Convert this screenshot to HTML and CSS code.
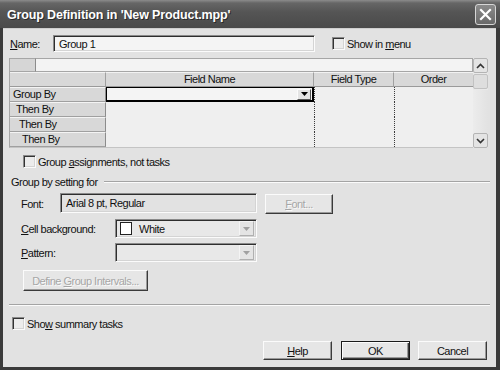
FILE: index.html
```html
<!DOCTYPE html>
<html lang="en">
<head>
    <meta charset="UTF-8">
    <title>Group Definition</title>
    <link rel="stylesheet" href="styles.css">
</head>
<body>
<div class="window">
    <div class="titlebar">
        <span class="title">Group Definition in 'New Product.mpp'</span>
        <span class="close-btn">
            <svg width="13" height="13" viewBox="0 0 13 13"><path d="M2 2 L11 11 M11 2 L2 11" stroke="#fff" stroke-width="2.2" stroke-linecap="square"/></svg>
        </span>
    </div>
    <div class="frame">
        <div class="dialog">
            <!-- nom du groupe -->
            <div class="name-row">
                <span class="name-label"><u>N</u>ame:</span>
                <div class="textbox name-box">Group 1</div>
                <span class="check menu-check"></span>
                <span class="check-label">Show in <u>m</u>enu</span>
            </div>

            <!-- grille des champs -->
            <div class="grid">
                <div class="grid-main">
                    <div class="edit-row">
                        <div class="edit-corner"></div>
                        <div class="edit-field"></div>
                    </div>
                    <div class="grid-table">
                        <div class="hcell"></div>
                        <div class="hcell">Field Name</div>
                        <div class="hcell">Field Type</div>
                        <div class="hcell">Order</div>

                        <div class="rowhead indent-0">Group By</div>
                        <div class="cell active">
                            <span class="drop-btn"><svg width="7" height="4" viewBox="0 0 7 4"><path d="M0 0 H7 L3.5 4 Z" fill="#000"/></svg></span>
                        </div>
                        <div class="cell dotted"></div>
                        <div class="cell dotted"></div>

                        <div class="rowhead indent-1">Then By</div>
                        <div class="cell"></div>
                        <div class="cell dotted"></div>
                        <div class="cell dotted"></div>

                        <div class="rowhead indent-2">Then By</div>
                        <div class="cell"></div>
                        <div class="cell dotted"></div>
                        <div class="cell dotted"></div>

                        <div class="rowhead indent-3">Then By</div>
                        <div class="cell"></div>
                        <div class="cell dotted"></div>
                        <div class="cell dotted"></div>
                    </div>
                </div>
                <div class="vscroll">
                    <div class="scroll-btn">
                        <svg width="9" height="6" viewBox="0 0 9 6"><path d="M1 5 L4.5 1.5 L8 5" fill="none" stroke="#333" stroke-width="1.6"/></svg>
                    </div>
                    <div class="scroll-thumb"></div>
                    <div class="scroll-track"></div>
                    <div class="scroll-btn">
                        <svg width="9" height="6" viewBox="0 0 9 6"><path d="M1 1 L4.5 4.5 L8 1" fill="none" stroke="#333" stroke-width="1.6"/></svg>
                    </div>
                </div>
            </div>

            <div class="check-row assign-row">
                <span class="check"></span>
                <span class="check-label">Group <u>a</u>ssignments, not tasks</span>
            </div>

            <div class="group-heading">
                <span>Group by setting for</span>
                <span class="etched-line"></span>
            </div>

            <div class="form-row font-row">
                <span class="field-label font-label">Font:</span>
                <div class="textbox font-box">Arial 8 pt, Regular</div>
                <span class="button disabled font-btn"><span><u>F</u>ont...</span></span>
            </div>

            <div class="form-row combo-row">
                <span class="field-label combo-label"><u>C</u>ell background:</span>
                <div class="textbox combo">
                    <span class="swatch"></span>
                    <span class="combo-text">White</span>
                    <span class="combo-arrow"><svg width="7" height="4" viewBox="0 0 7 4"><path d="M0 0 H7 L3.5 4 Z" fill="#a0a0a0"/></svg></span>
                </div>
            </div>

            <div class="form-row combo-row pattern-row">
                <span class="field-label combo-label"><u>P</u>attern:</span>
                <div class="textbox combo">
                    <span class="combo-text"></span>
                    <span class="combo-arrow"><svg width="7" height="4" viewBox="0 0 7 4"><path d="M0 0 H7 L3.5 4 Z" fill="#a0a0a0"/></svg></span>
                </div>
            </div>

            <div class="define-row">
                <span class="button disabled define-btn"><span>Define <u>G</u>roup Intervals...</span></span>
            </div>

            <div class="separator"></div>

            <div class="check-row summary-row">
                <span class="check"></span>
                <span class="check-label">Sho<u>w</u> summary tasks</span>
            </div>

            <div class="button-row">
                <span class="button"><span><u>H</u>elp</span></span>
                <span class="button default">OK</span>
                <span class="button">Cancel</span>
            </div>
        </div>
    </div>
</div>
</body>
</html>
```

FILE: styles.css
```css
body {
    margin: 0;
    font-family: "Liberation Sans", Arial, sans-serif;
    font-size: 11px;
    letter-spacing: -0.5px;
    color: #111;
    background: #fff;
}

u {
    text-decoration: underline;
    text-underline-offset: 1px;
}

.window {
    width: 500px;
    height: 370px;
    display: flex;
    flex-direction: column;
    background: #3a3a3a;
}

/* barre de titre */
.titlebar {
    height: 28px;
    flex: none;
    display: flex;
    align-items: center;
    padding: 0 4px 0 7px;
    background: linear-gradient(#8c8c8c 0, #666 3px, #555 12px, #4a4a4a 28px);
    color: #fff;
}

.title {
    flex: 1;
    font-size: 12.5px;
    font-weight: bold;
    letter-spacing: -0.15px;
    text-shadow: 1px 1px 0 #2a2a2a;
    margin-top: 1px;
}

.close-btn {
    width: 19px;
    height: 19px;
    border: 1px solid #d6d6d6;
    border-radius: 3px;
    background: linear-gradient(#8a8a8a, #6a6a6a);
    display: flex;
    align-items: center;
    justify-content: center;
}

.frame {
    flex: 1;
    display: flex;
    padding: 0 4px 3px 3px;
}

.dialog {
    flex: 1;
    display: flex;
    flex-direction: column;
    background: #e2e2e2;
    border-top: 1px solid #cfcfcf;
}

/* champs 3D */
.textbox {
    box-sizing: border-box;
    border: 1px solid;
    border-color: #8a8a8a #fbfbfb #fbfbfb #8a8a8a;
    box-shadow: inset 1px 1px 0 #2e2e2e, inset -1px -1px 0 #d4d4d4;
}

.check {
    box-sizing: border-box;
    width: 13px;
    height: 13px;
    flex: none;
    border: 1px solid;
    border-color: #8a8a8a #fbfbfb #fbfbfb #8a8a8a;
    box-shadow: inset 1px 1px 0 #333, inset -1px -1px 0 #d4d4d4;
    background: #ececec;
}

.check-label {
    margin-left: 2px;
}

.button {
    box-sizing: border-box;
    display: flex;
    align-items: center;
    justify-content: center;
    border: 1px solid;
    border-color: #fbfbfb #3a3a3a #3a3a3a #fbfbfb;
    box-shadow: inset -1px -1px 0 #9a9a9a;
    background: #e6e6e6;
}

.button.disabled {
    color: #a6a6a6;
    text-shadow: 1px 1px 0 #fafafa;
}

.button.default {
    border: 1px solid #1a1a1a;
    box-shadow: inset 1px 1px 0 #fbfbfb, inset -1px -1px 0 #3a3a3a, inset -2px -2px 0 #9a9a9a;
}

/* ligne du nom */
.name-row {
    margin-top: 6px;
    height: 17px;
    display: flex;
    align-items: center;
    padding-left: 7px;
}

.name-label {
    width: 43px;
}

.name-box {
    width: 262px;
    height: 17px;
    padding: 2px 0 0 5px;
    background: #f4f4f4;
}

.menu-check {
    margin-left: 17px;
}

/* grille */
.grid {
    margin: 6px 0 0 6px;
    width: 479px;
    height: 90px;
    display: flex;
    box-sizing: border-box;
}

.grid-main {
    width: 464px;
    display: flex;
    flex-direction: column;
}

.edit-row {
    height: 15px;
    display: flex;
}

.edit-corner {
    width: 27px;
    box-sizing: border-box;
    background: #d6d6d6;
    border: 1px solid #a6a6a6;
    border-right-color: #8c8c8c;
}

.edit-field {
    flex: 1;
    box-sizing: border-box;
    background: #f3f3f3;
    border: 1px solid #a6a6a6;
    border-left: none;
}

.grid-table {
    flex: 1;
    display: grid;
    grid-template-columns: 96px 208px 80px 80px;
    grid-auto-rows: 15px;
    background: #efefef;
    border-left: 1px solid #a6a6a6;
    border-bottom: 1px solid #c4c4c4;
}

.hcell {
    box-sizing: border-box;
    background: #d8d8d8;
    border-top: 1px solid #f2f2f2;
    border-right: 1px solid #a0a0a0;
    border-bottom: 1px solid #9a9a9a;
    text-align: center;
    line-height: 13px;
}

.rowhead {
    box-sizing: border-box;
    background: #d8d8d8;
    border-top: 1px solid #f4f4f4;
    border-bottom: 1px solid #a0a0a0;
    border-right: 1px solid #8c8c8c;
    line-height: 13px;
}

.indent-0 { padding-left: 3px; }
.indent-1 { padding-left: 6px; }
.indent-2 { padding-left: 9px; }
.indent-3 { padding-left: 12px; }

.cell {
    box-sizing: border-box;
}

.cell.dotted {
    border-left: 1px dotted #3a3a3a;
}

.cell.active {
    border: 1px solid #000;
    border-bottom-width: 2px;
    border-right-width: 2px;
    background: #f4f4f4;
    display: flex;
    justify-content: flex-end;
    align-items: center;
    padding-right: 1px;
}

.drop-btn {
    box-sizing: border-box;
    width: 14px;
    height: 11px;
    display: flex;
    align-items: center;
    justify-content: center;
    background: #e4e4e4;
    border: 1px solid;
    border-color: #fbfbfb #555 #555 #fbfbfb;
}

.vscroll {
    width: 15px;
    display: flex;
    flex-direction: column;
    background: #e9e9e9;
}

.scroll-btn {
    box-sizing: border-box;
    height: 15px;
    display: flex;
    align-items: center;
    justify-content: center;
    background: #e4e4e4;
    border: 1px solid #b4b4b4;
    border-radius: 2px;
}

.scroll-thumb {
    box-sizing: border-box;
    height: 15px;
    margin: 1px 0;
    background: #dedede;
    border: 1px solid #c2c2c2;
    border-radius: 2px;
}

.scroll-track {
    flex: 1;
    background: linear-gradient(90deg, #ececec, #e2e2e2);
}

/* cases a cocher */
.check-row {
    height: 13px;
    display: flex;
    align-items: center;
}

.assign-row {
    margin: 7px 0 0 20px;
}

.group-heading {
    margin-top: 8px;
    height: 12px;
    display: flex;
    align-items: center;
    padding: 0 6px 0 8px;
}

.etched-line {
    flex: 1;
    margin-left: 6px;
    height: 0;
    border-top: 1px solid #a4a4a4;
    border-bottom: 1px solid #fbfbfb;
}

.form-row {
    display: flex;
    align-items: center;
    padding-left: 18px;
}

.font-row {
    margin-top: 5px;
    height: 21px;
}

.font-label {
    width: 39px;
}

.font-box {
    width: 197px;
    height: 20px;
    align-self: flex-start;
    padding: 3px 0 0 5px;
    background: #e2e2e2;
}

.font-btn {
    margin-left: 8px;
    width: 68px;
    height: 20px;
    align-self: flex-end;
}

.combo-row {
    margin-top: 5px;
    height: 19px;
}

.combo-label {
    width: 94px;
}

.combo {
    width: 142px;
    height: 19px;
    display: flex;
    align-items: center;
    padding: 0 2px 0 4px;
    background: #e8e8e8;
}

.swatch {
    box-sizing: border-box;
    width: 12px;
    height: 13px;
    background: #fff;
    border: 1px solid #222;
}

.combo-text {
    flex: 1;
    margin-left: 7px;
}

.combo-arrow {
    box-sizing: border-box;
    width: 15px;
    height: 15px;
    display: flex;
    align-items: center;
    justify-content: center;
    background: #e4e4e4;
    border: 1px solid;
    border-color: #f4f4f4 #b0b0b0 #b0b0b0 #f4f4f4;
}

.define-row {
    margin: 8px 0 0 20px;
    height: 21px;
    display: flex;
}

.define-btn {
    width: 125px;
}

.separator {
    margin: 13px 6px 0 6px;
    height: 0;
    border-top: 1px solid #a4a4a4;
    border-bottom: 1px solid #fbfbfb;
}

.summary-row {
    margin: 11px 0 0 9px;
}

.button-row {
    margin-top: 11px;
    height: 19px;
    display: flex;
    justify-content: flex-end;
    padding-right: 9px;
}

.button-row .button {
    width: 69px;
    height: 19px;
    margin-left: 8px;
}

.button-row .button.default {
    margin-left: 9px;
}
```
